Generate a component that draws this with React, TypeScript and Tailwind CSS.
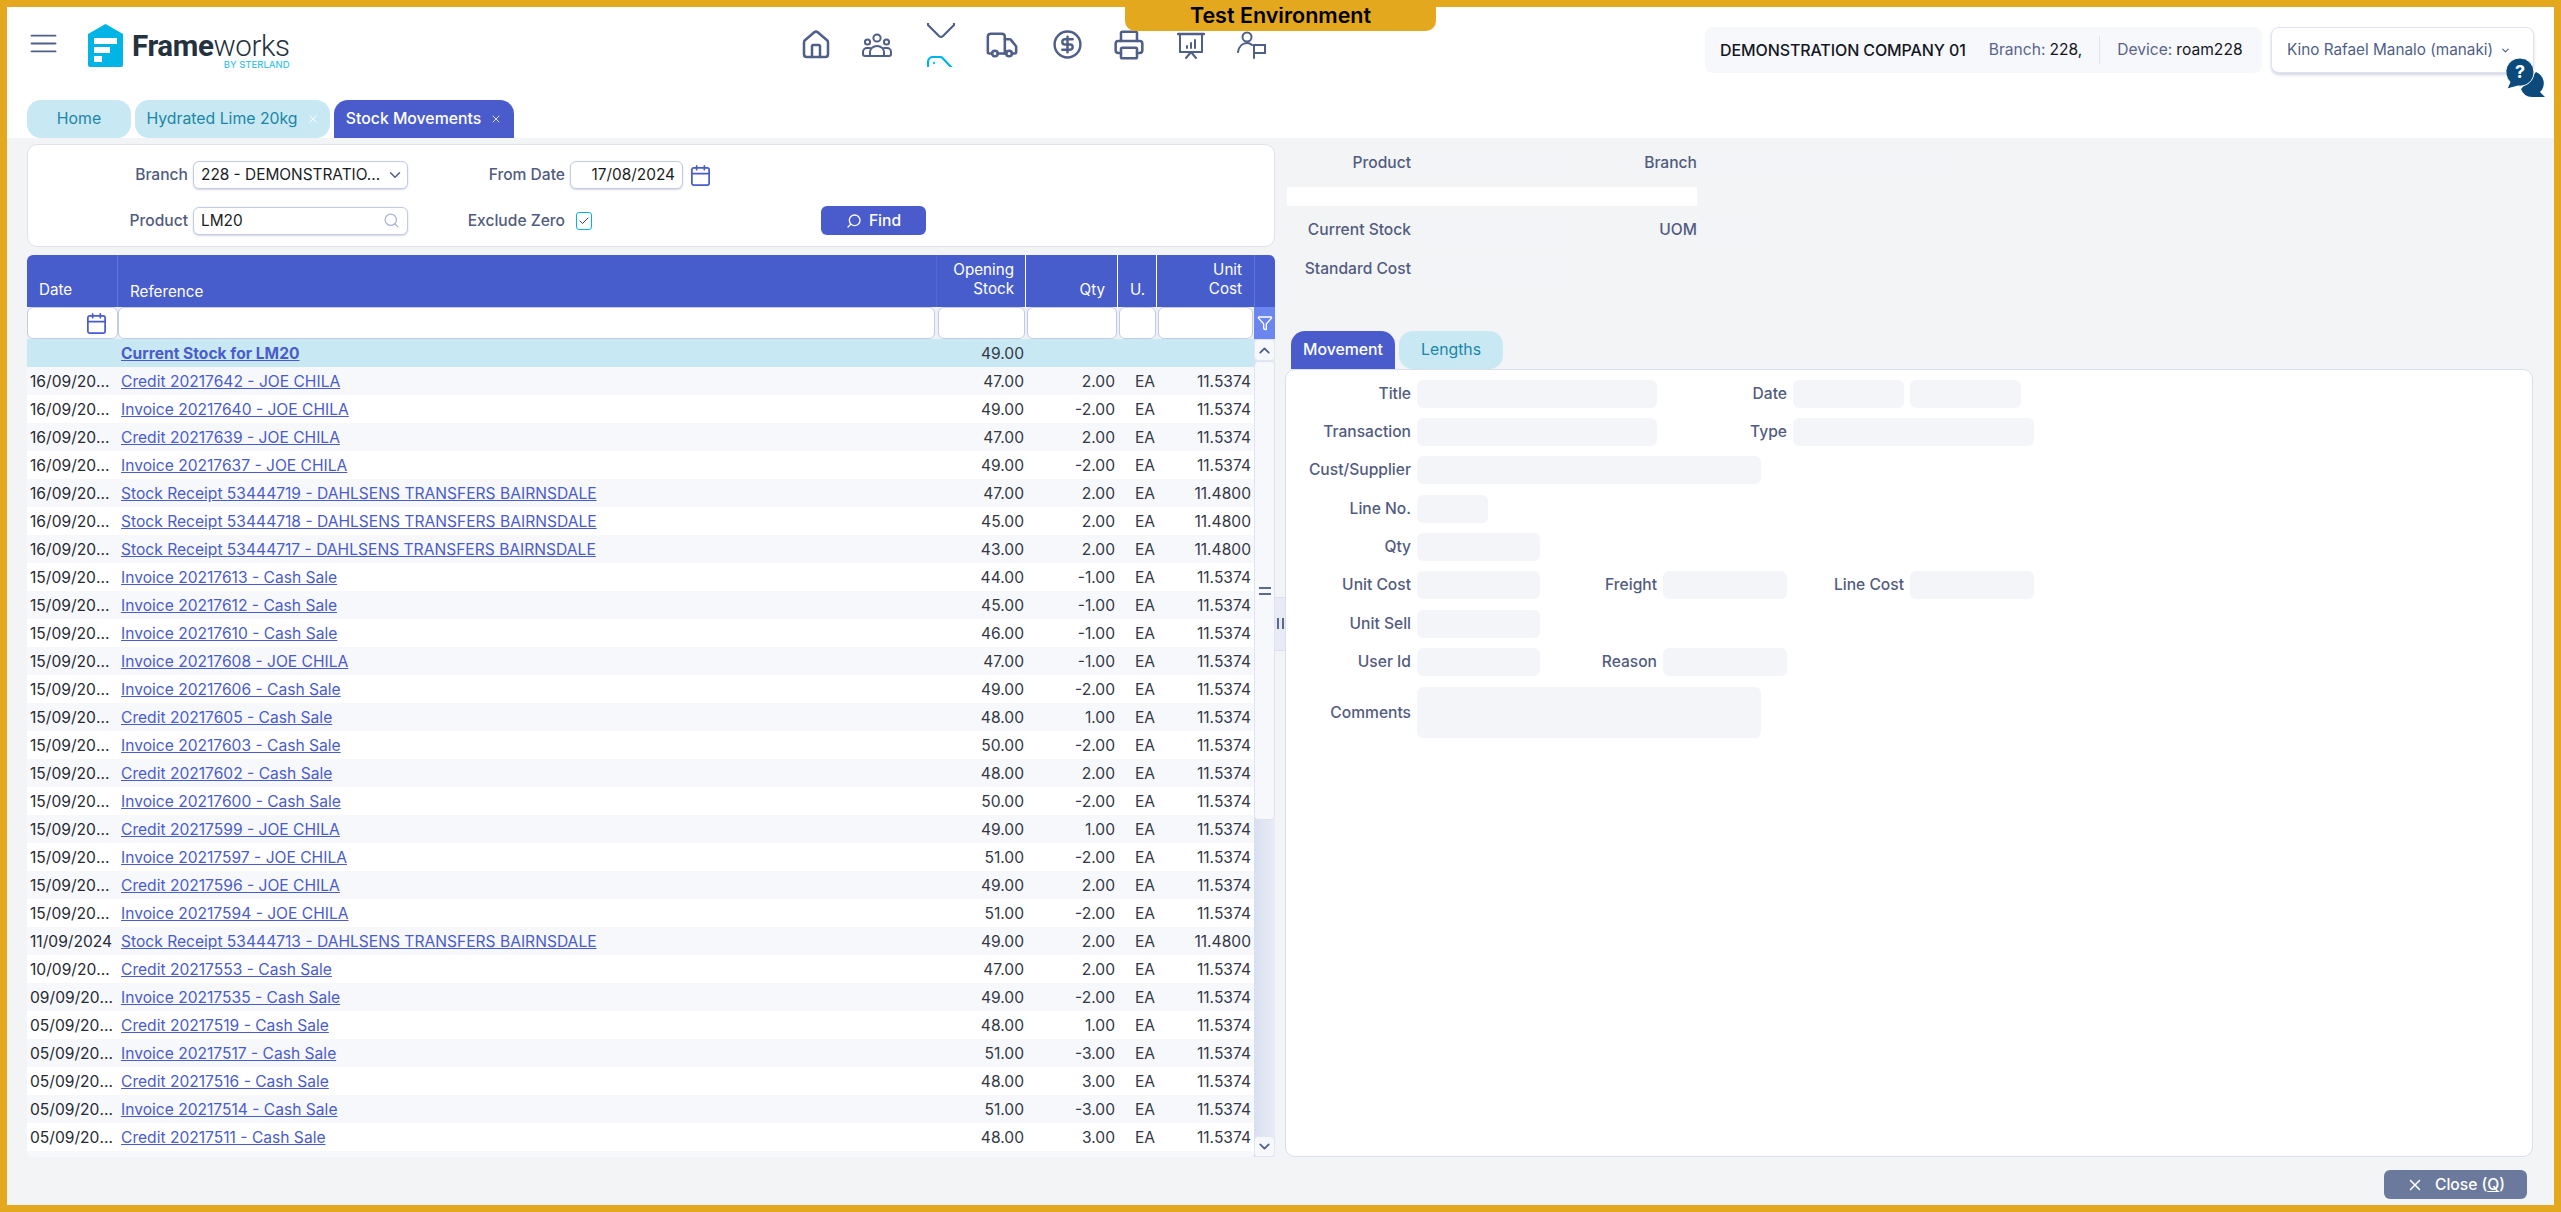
import { Calendar, Check, ChevronDown, ChevronUp, CircleDollarSign, Filter, House, Menu, Printer, Search, Truck, X } from "lucide-react"

const rows = [
  ["16/09/2024", "Credit 20217642 - JOE CHILA", "47.00", "2.00", "11.5374"],
  ["16/09/2024", "Invoice 20217640 - JOE CHILA", "49.00", "-2.00", "11.5374"],
  ["16/09/2024", "Credit 20217639 - JOE CHILA", "47.00", "2.00", "11.5374"],
  ["16/09/2024", "Invoice 20217637 - JOE CHILA", "49.00", "-2.00", "11.5374"],
  ["16/09/2024", "Stock Receipt 53444719 - DAHLSENS TRANSFERS BAIRNSDALE", "47.00", "2.00", "11.4800"],
  ["16/09/2024", "Stock Receipt 53444718 - DAHLSENS TRANSFERS BAIRNSDALE", "45.00", "2.00", "11.4800"],
  ["16/09/2024", "Stock Receipt 53444717 - DAHLSENS TRANSFERS BAIRNSDALE", "43.00", "2.00", "11.4800"],
  ["15/09/2024", "Invoice 20217613 - Cash Sale", "44.00", "-1.00", "11.5374"],
  ["15/09/2024", "Invoice 20217612 - Cash Sale", "45.00", "-1.00", "11.5374"],
  ["15/09/2024", "Invoice 20217610 - Cash Sale", "46.00", "-1.00", "11.5374"],
  ["15/09/2024", "Invoice 20217608 - JOE CHILA", "47.00", "-1.00", "11.5374"],
  ["15/09/2024", "Invoice 20217606 - Cash Sale", "49.00", "-2.00", "11.5374"],
  ["15/09/2024", "Credit 20217605 - Cash Sale", "48.00", "1.00", "11.5374"],
  ["15/09/2024", "Invoice 20217603 - Cash Sale", "50.00", "-2.00", "11.5374"],
  ["15/09/2024", "Credit 20217602 - Cash Sale", "48.00", "2.00", "11.5374"],
  ["15/09/2024", "Invoice 20217600 - Cash Sale", "50.00", "-2.00", "11.5374"],
  ["15/09/2024", "Credit 20217599 - JOE CHILA", "49.00", "1.00", "11.5374"],
  ["15/09/2024", "Invoice 20217597 - JOE CHILA", "51.00", "-2.00", "11.5374"],
  ["15/09/2024", "Credit 20217596 - JOE CHILA", "49.00", "2.00", "11.5374"],
  ["15/09/2024", "Invoice 20217594 - JOE CHILA", "51.00", "-2.00", "11.5374"],
  ["11/09/2024", "Stock Receipt 53444713 - DAHLSENS TRANSFERS BAIRNSDALE", "49.00", "2.00", "11.4800"],
  ["10/09/2024", "Credit 20217553 - Cash Sale", "47.00", "2.00", "11.5374"],
  ["09/09/2024", "Invoice 20217535 - Cash Sale", "49.00", "-2.00", "11.5374"],
  ["05/09/2024", "Credit 20217519 - Cash Sale", "48.00", "1.00", "11.5374"],
  ["05/09/2024", "Invoice 20217517 - Cash Sale", "51.00", "-3.00", "11.5374"],
  ["05/09/2024", "Credit 20217516 - Cash Sale", "48.00", "3.00", "11.5374"],
  ["05/09/2024", "Invoice 20217514 - Cash Sale", "51.00", "-3.00", "11.5374"],
  ["05/09/2024", "Credit 20217511 - Cash Sale", "48.00", "3.00", "11.5374"],
]

const gridCols = "grid grid-cols-[91px_819px_89px_92px_39px_97px]"

function Logo() {
  return (
    <div className="flex items-start">
      <svg width="35" height="43" viewBox="0 0 35 43" className="shrink-0">
        <path d="M17.5 0 L35 10 V41 a2 2 0 0 1 -2 2 H2 a2 2 0 0 1 -2 -2 V10 Z" fill="#00b5e6" />
        <rect x="6" y="14" width="23" height="6" fill="#fff" />
        <rect x="6" y="23" width="16" height="6" fill="#fff" />
        <rect x="6" y="32" width="8" height="6" fill="#fff" />
      </svg>
      <div className="ml-[9px] mt-[9px] flex flex-col items-end">
        <div className="text-[29.5px] leading-[27px] tracking-[-0.4px] text-[#24313f] font-['Roboto',sans-serif]">
          <span className="font-bold">Frame</span>
          <span className="font-light">works</span>
        </div>
        <div className="text-[9.5px] leading-[10px] font-medium text-[#3cc3ea]">BY STERLAND</div>
      </div>
    </div>
  )
}

function TeamIcon() {
  return (
    <svg width="30" height="32" viewBox="0 0 30 32" fill="none" stroke="#4f5f88" strokeWidth="2" strokeLinecap="round" strokeLinejoin="round">
      <g transform="translate(0 4)">
        <circle cx="15" cy="5" r="3.6" />
        <circle cx="5.5" cy="9" r="2.6" />
        <circle cx="24.5" cy="9" r="2.6" />
        <path d="M8 23 V19 a7 6 0 0 1 14 0 V23" />
        <path d="M8 15 H5 a4 4 0 0 0 -4 4 V21 a2 2 0 0 0 2 2 H27 a2 2 0 0 0 2 -2 V19 a4 4 0 0 0 -4 -4 H22" />
      </g>
    </svg>
  )
}

function TagNav() {
  return (
    <div className="w-[28px] h-[44px] mt-[-6px] flex flex-col items-center overflow-hidden">
      <svg width="28" height="16" viewBox="0 0 28 16" fill="none" stroke="#4f5f88" strokeWidth="2.2" strokeLinecap="round" strokeLinejoin="round">
        <path d="M1 -1 V2 L12 13 a3 3 0 0 0 4 0 L27 2 V-1" />
      </svg>
      <svg className="mt-[17px] shrink-0" width="28" height="11" viewBox="0 0 28 11" fill="none" stroke="#00b5e6" strokeWidth="2.2">
        <path d="M1 12 V6 a5 5 0 0 1 5 -5 H13 a4 4 0 0 1 3 1.5 L25 12" />
        <circle cx="7" cy="7" r="0.8" fill="#00b5e6" strokeWidth="1" />
      </svg>
    </div>
  )
}

function BoardIcon() {
  return (
    <svg width="28" height="32" viewBox="0 0 28 32" fill="none" stroke="#4f5f88" strokeWidth="2" strokeLinecap="round" strokeLinejoin="round">
      <g transform="translate(0 3)">
        <path d="M1 2 H27" strokeWidth="2.4" />
        <path d="M3 2 V20 H25 V2" />
        <path d="M10 16 V14 M14 16 V11 M18 16 V8" />
        <path d="M14 20 L9 26 M14 20 L19 26" />
      </g>
    </svg>
  )
}

function UserFlagIcon() {
  return (
    <svg width="30" height="32" viewBox="0 0 30 32" fill="none" stroke="#4f5f88" strokeWidth="2" strokeLinecap="round">
      <g transform="translate(0 2)">
        <circle cx="10" cy="6" r="4.5" />
        <path d="M1 21 C2 15 6 12 10 12 C12 12 14 13 15 14" />
        <path d="M17 27 V14 H28 V22 H17" />
      </g>
    </svg>
  )
}

function HelpIcon() {
  return (
    <svg width="40" height="40" viewBox="0 0 40 40" className="absolute top-[51px] left-[2499px]">
      <path d="M30 14 a12 12 0 0 1 4 20 L39 39 H26 a12 12 0 0 1 -11 -8 Z" fill="#0c4a7c" />
      <path d="M14 0 a14 14 0 0 1 14 14 a14 14 0 0 1 -16 14 L1 31 L4 24 A14 14 0 0 1 14 0 Z" fill="#0c4a7c" stroke="#fff" strokeWidth="1" />
      <text x="14" y="20" textAnchor="middle" fontSize="18" fontWeight="700" fill="#fff" fontFamily="Inter, sans-serif">?</text>
    </svg>
  )
}

function Tab({ label, active, close, width }: { label: string; active?: boolean; close?: boolean; width: string }) {
  return (
    <div
      className={`${width} h-[38px] rounded-t-[14px] flex items-center justify-center gap-[9px] text-[15.8px] ${
        active ? "bg-[#4a5ccb] text-white font-medium" : "bg-[#c8e9f3] text-[#1b86a6] rounded-b-[14px]"
      }`}
    >
      <span>{label}</span>
      {close && <X className={`w-[12px] h-[12px] ${active ? "text-[#dfe4fa]" : "text-white"}`} strokeWidth={2} />}
    </div>
  )
}

function Header() {
  return (
    <div className="h-[131px] bg-white flex flex-col shrink-0">
      <div className="h-[93px] flex">
        <div className="flex items-start pt-[17px] pl-[23px] w-[300px] shrink-0">
          <Menu className="w-[27px] h-[27px] mt-[6px] text-[#4f5f88] scale-x-[1.3]" strokeWidth={1.7} />
          <div className="ml-[31px]">
            <Logo />
          </div>
        </div>
        <div className="ml-[493px] pt-[22px] flex items-start h-fit">
          <House className="w-[32px] h-[32px] text-[#4f5f88]" strokeWidth={1.9} />
          <div className="ml-[30px]">
            <TeamIcon />
          </div>
          <div className="ml-[35px]">
            <TagNav />
          </div>
          <div className="ml-[30px]">
            <Truck className="w-[34px] h-[34px] -mt-[1px] text-[#4f5f88]" strokeWidth={1.8} />
          </div>
          <div className="ml-[33px]">
            <CircleDollarSign className="w-[31px] h-[31px] text-[#4f5f88]" strokeWidth={1.9} />
          </div>
          <div className="ml-[30px]">
            <Printer className="w-[32px] h-[32px] text-[#4f5f88]" strokeWidth={1.9} />
          </div>
          <div className="ml-[32px]">
            <BoardIcon />
          </div>
          <div className="ml-[32px]">
            <UserFlagIcon />
          </div>
        </div>
        <div className="ml-auto mr-[20px] mt-[20px] flex items-start gap-[9px] h-fit">
          <div className="h-[46px] w-[557px] rounded-[8px] bg-[#f7f8fc] flex items-center pl-[15px] text-[15.6px]">
            <span className="text-[16px] font-medium text-[#14171f] tracking-[-0.1px]">DEMONSTRATION COMPANY 01</span>
            <span className="ml-[23px] text-[#59648a]">Branch:</span>
            <span className="ml-[4px] text-[#14171f]">228,</span>
            <div className="ml-[17px] w-px h-[28px] bg-[#dfe3ef]" />
            <span className="ml-[17px] text-[#59648a]">Device:</span>
            <span className="ml-[4px] text-[#14171f]">roam228</span>
          </div>
          <div className="h-[46px] w-[263px] rounded-[8px] bg-white border border-[#dfe3ef] shadow-[0_2px_3px_rgba(80,95,150,0.25)] flex items-center pl-[15px] text-[15.3px] text-[#4f5f88]">
            <span>Kino Rafael Manalo (manaki)</span>
            <ChevronDown className="ml-[7px] w-[11px] h-[11px]" strokeWidth={2.5} />
          </div>
        </div>
      </div>
      <div className="h-[38px] flex items-end gap-[4px] pl-[20px]">
        <Tab label="Home" width="w-[104px]" />
        <Tab label="Hydrated Lime 20kg" width="w-[195px]" close />
        <Tab label="Stock Movements" width="w-[180px]" active close />
      </div>
    </div>
  )
}

function FilterLabel({ children, width }: { children: string; width: string }) {
  return <div className={`${width} text-right text-[15.6px] font-medium text-[#525c80] shrink-0`}>{children}</div>
}

function FilterCard() {
  const box = "h-[28px] rounded-[6px] bg-white border border-[#c3cbe2] shadow-[0_1px_2px_rgba(80,95,150,0.25)] flex items-center text-[15.4px] text-[#1a1d26]"
  return (
    <div className="h-[103px] rounded-[10px] bg-white border border-[#e0e2e8] flex flex-col gap-[17px] pt-[16px] shrink-0">
      <div className="flex items-center">
        <FilterLabel width="w-[160px]">Branch</FilterLabel>
        <div className={`${box} ml-[5px] w-[215px] pl-[7px] pr-[3px] justify-between`}>
          <span>228 - DEMONSTRATIO...</span>
          <ChevronDown className="w-[18px] h-[18px] text-[#4f5f88]" strokeWidth={2} />
        </div>
        <FilterLabel width="w-[157px]">From Date</FilterLabel>
        <div className={`${box} ml-[5px] w-[113px] justify-end pr-[7px]`}>17/08/2024</div>
        <Calendar className="ml-[6px] w-[23px] h-[23px] text-[#4a5ccb]" strokeWidth={1.8} />
      </div>
      <div className="flex items-center">
        <FilterLabel width="w-[160px]">Product</FilterLabel>
        <div className={`${box} ml-[5px] w-[215px] px-[7px] justify-between`}>
          <span>LM20</span>
          <Search className="w-[17px] h-[17px] text-[#aab5d4]" strokeWidth={1.8} />
        </div>
        <FilterLabel width="w-[157px]">Exclude Zero</FilterLabel>
        <div className="ml-[11px] w-[16px] h-[18px] rounded-[3px] border border-[#00b5e6] flex items-center justify-center">
          <Check className="w-[12px] h-[12px] text-[#333b55]" strokeWidth={2} />
        </div>
        <div className="ml-[229px] w-[105px] h-[29px] rounded-[6px] bg-[#4a5ccb] flex items-center justify-center gap-[7px] text-[15.6px] font-medium text-white">
          <Search className="w-[16px] h-[16px] -scale-x-100" strokeWidth={2} />
          <span>Find</span>
        </div>
      </div>
    </div>
  )
}

function Scrollbar() {
  return (
    <div className="w-[21px] flex flex-col bg-gradient-to-r from-[#d8dfef] to-[#e8ecf6]">
      <div className="h-[22px] bg-[#f7f8fc] border border-[#e2e6f2] rounded-[4px] flex items-center justify-center shrink-0">
        <ChevronUp className="w-[17px] h-[17px] text-[#4f5f88]" strokeWidth={2.5} />
      </div>
      <div className="h-[459px] bg-[#f7f8fc] border border-[#dfe3ef] rounded-[4px] flex items-center justify-center shrink-0">
        <div className="w-[12px] h-[8px] border-y-2 border-[#5b6a90]" />
      </div>
      <div className="flex-1" />
      <div className="h-[21px] bg-[#f7f8fc] border border-[#e2e6f2] rounded-[4px] flex items-center justify-center shrink-0">
        <ChevronDown className="w-[17px] h-[17px] text-[#4f5f88]" strokeWidth={2.5} />
      </div>
    </div>
  )
}

function MovementsTable() {
  const filterBox = "h-[32px] bg-white border border-[#c3cbe2] rounded-[6px]"
  return (
    <div className="mt-[8px] flex flex-col text-[15.2px] flex-1 min-h-0">
      <div className="h-[52px] bg-[#485dcc] rounded-t-[6px] text-white flex shrink-0">
        <div className={`${gridCols} w-[1227px]`}>
          <div className="pl-[12px] pt-[24px] border-r border-[#6275d8]">Date</div>
          <div className="pl-[12px] pt-[26px] border-r border-[#5568d2]">Reference</div>
          <div className="pr-[11px] pt-[5px] text-right leading-[19px] border-r border-white">
            Opening
            <br />
            Stock
          </div>
          <div className="pr-[12px] pt-[24px] text-right border-r border-white">Qty</div>
          <div className="pl-[12px] pt-[24px] border-r border-white">U.</div>
          <div className="pr-[12px] pt-[5px] text-right leading-[19px]">
            Unit
            <br />
            Cost
          </div>
        </div>
        <div className="w-[21px] border-l border-[#6275d8]" />
      </div>
      <div className="h-[32px] flex shrink-0">
        <div className={`${gridCols} w-[1227px] bg-[#eef0f8]`}>
          <div className={`${filterBox} flex items-center justify-end pr-[9px]`}>
            <Calendar className="w-[23px] h-[23px] text-[#4a5ccb]" strokeWidth={1.8} />
          </div>
          <div className={`${filterBox} mr-[2px]`} />
          <div className={`${filterBox} mx-[1px]`} />
          <div className={`${filterBox} mx-[1px]`} />
          <div className={`${filterBox} mx-[1px]`} />
          <div className={`${filterBox} mx-[1px]`} />
        </div>
        <div className="w-[21px] bg-[#6b86ee] flex items-center justify-center">
          <Filter className="w-[16px] h-[16px] text-white" strokeWidth={2} />
        </div>
      </div>
      <div className="flex h-[818px] shrink-0 text-[15.6px]">
        <div className="w-[1227px] flex flex-col">
          <div className={`${gridCols} h-[28px] pt-[2px] items-center bg-[#c8e9f3] shrink-0`}>
            <div />
            <a className="pl-[3px] font-bold text-[#4a5ccb] underline">Current Stock for LM20</a>
            <div className="pr-[2px] text-right text-[#333845]">49.00</div>
          </div>
          {rows.map((row, index) => (
            <div key={index} className={`${gridCols} h-[28px] pt-[2px] items-center shrink-0 ${index % 2 === 0 ? "bg-[#f7f8fc]" : "bg-white"}`}>
              <div className="pl-[3px] pr-[4px] truncate text-[#262a33]">{row[0]}</div>
              <a className="pl-[3px] text-[#4a5ccb] underline">{row[1]}</a>
              <div className="pr-[2px] text-right text-[#333845]">{row[2]}</div>
              <div className="pr-[3px] text-right text-[#333845]">{row[3]}</div>
              <div className="pl-[17px] text-[#333845]">EA</div>
              <div className="pr-[3px] text-right text-[#333845]">{row[4]}</div>
            </div>
          ))}
          <div className="flex-1 bg-[#f7f8fc] rounded-b-[6px]" />
        </div>
        <Scrollbar />
      </div>
    </div>
  )
}

function Splitter() {
  return (
    <div className="w-[10px] shrink-0 flex items-center">
      <div className="h-[54px] w-full mt-[-54px] bg-[#e8ebf5] border-y border-[#d8deee] flex items-center justify-center gap-[3px]">
        <div className="w-[2px] h-[11px] bg-[#5b6a90]" />
        <div className="w-[2px] h-[11px] bg-[#5b6a90]" />
      </div>
    </div>
  )
}

function FieldLabel({ text, width }: { text: string; width: string }) {
  return <div className={`${width} pr-[6px] text-right text-[15.6px] font-medium text-[#525c80] shrink-0`}>{text}</div>
}

function Field({ width, height = "h-[28px]" }: { width: string; height?: string }) {
  return <div className={`${width} ${height} rounded-[6px] bg-[#f4f5f9] shrink-0`} />
}

function ProductSummary() {
  const faint = "bg-[#f3f4f8] rounded-[4px] shrink-0"
  return (
    <div className="h-[187px] shrink-0 flex flex-col pt-[6px]">
      <div className="flex items-center h-[25px]">
        <FieldLabel text="Product" width="w-[132px]" />
        <div className={`${faint} w-[150px] h-[25px]`} />
        <FieldLabel text="Branch" width="w-[136px]" />
        <div className={`${faint} w-[252px] h-[25px]`} />
      </div>
      <div className="ml-[2px] mt-[12px] w-[410px] h-[19px] bg-white" />
      <div className="flex items-center h-[30px] mt-[9px]">
        <FieldLabel text="Current Stock" width="w-[132px]" />
        <div className={`${faint} w-[150px] h-[30px]`} />
        <FieldLabel text="UOM" width="w-[136px]" />
        <div className={`${faint} w-[59px] h-[30px]`} />
      </div>
      <div className="flex items-center h-[28px] mt-[10px]">
        <FieldLabel text="Standard Cost" width="w-[132px]" />
        <div className={`${faint} w-[150px] h-[28px]`} />
      </div>
    </div>
  )
}

function MovementForm() {
  return (
    <div className="flex-1 rounded-[10px] bg-white border border-[#d8deee] pt-[10px] flex flex-col">
      <div className="flex items-center">
        <FieldLabel text="Title" width="w-[131px]" />
        <Field width="w-[240px]" />
        <FieldLabel text="Date" width="w-[136px]" />
        <Field width="w-[111px]" />
        <div className="ml-[6px]">
          <Field width="w-[111px]" />
        </div>
      </div>
      <div className="flex items-center mt-[10px]">
        <FieldLabel text="Transaction" width="w-[131px]" />
        <Field width="w-[240px]" />
        <FieldLabel text="Type" width="w-[136px]" />
        <Field width="w-[241px]" />
      </div>
      <div className="flex items-center mt-[10px]">
        <FieldLabel text="Cust/Supplier" width="w-[131px]" />
        <Field width="w-[344px]" />
      </div>
      <div className="flex items-center mt-[11px]">
        <FieldLabel text="Line No." width="w-[131px]" />
        <Field width="w-[71px]" />
      </div>
      <div className="flex items-center mt-[10px]">
        <FieldLabel text="Qty" width="w-[131px]" />
        <Field width="w-[123px]" />
      </div>
      <div className="flex items-center mt-[10px]">
        <FieldLabel text="Unit Cost" width="w-[131px]" />
        <Field width="w-[123px]" />
        <FieldLabel text="Freight" width="w-[123px]" />
        <Field width="w-[124px]" />
        <FieldLabel text="Line Cost" width="w-[123px]" />
        <Field width="w-[124px]" />
      </div>
      <div className="flex items-center mt-[11px]">
        <FieldLabel text="Unit Sell" width="w-[131px]" />
        <Field width="w-[123px]" />
      </div>
      <div className="flex items-center mt-[10px]">
        <FieldLabel text="User Id" width="w-[131px]" />
        <Field width="w-[123px]" />
        <FieldLabel text="Reason" width="w-[123px]" />
        <Field width="w-[124px]" />
      </div>
      <div className="flex items-center mt-[11px]">
        <FieldLabel text="Comments" width="w-[131px]" />
        <Field width="w-[344px]" height="h-[51px]" />
      </div>
    </div>
  )
}

function RightPane() {
  return (
    <div className="w-[1248px] shrink-0 flex flex-col">
      <ProductSummary />
      <div className="h-[38px] flex gap-[4px] pl-[6px] shrink-0">
        <Tab label="Movement" width="w-[104px]" active />
        <Tab label="Lengths" width="w-[104px]" />
      </div>
      <MovementForm />
    </div>
  )
}

export default function App() {
  return (
    <div className="relative w-[2561px] h-[1212px] overflow-hidden border-[7px] border-[#e4a81f] bg-[#f3f4f6] flex flex-col font-['Inter',sans-serif]">
      <Header />
      <div className="absolute top-[-7px] left-[1118px] w-[311px] h-[31px] bg-[#e4a81f] rounded-b-[10px] flex items-center justify-center text-[21.5px] font-semibold text-black">
        Test Environment
      </div>
      <HelpIcon />
      <div className="h-[1013px] mt-[6px] flex pl-[20px] shrink-0">
        <div className="w-[1248px] shrink-0 flex flex-col">
          <FilterCard />
          <MovementsTable />
        </div>
        <Splitter />
        <RightPane />
      </div>
      <div className="flex justify-end pr-[27px] pt-[13px]">
        <div className="w-[143px] h-[29px] rounded-[6px] bg-[#6b7a9c] flex items-center justify-center gap-[11px] text-[15.6px] font-medium text-white">
          <X className="w-[18px] h-[18px]" strokeWidth={2} />
          <span>
            Close (<span className="underline">Q</span>)
          </span>
        </div>
      </div>
    </div>
  )
}
